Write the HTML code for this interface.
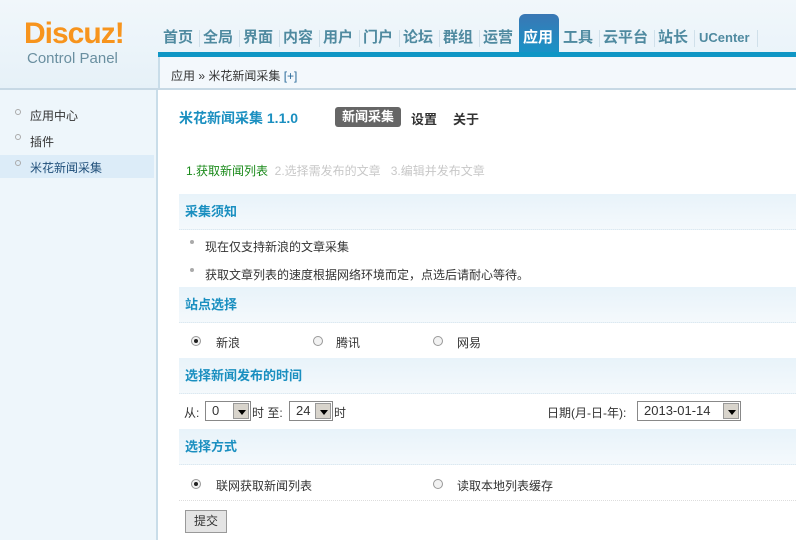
<!DOCTYPE html><html><head><meta charset="utf-8"><style>
*{margin:0;padding:0;box-sizing:border-box}
body{width:796px;height:540px;overflow:hidden;font-family:"Liberation Sans","Noto Sans CJK SC",sans-serif;font-size:12px;color:#333;background:#fff;position:relative}
.a{position:absolute}
#hd{left:0;top:0;width:796px;height:90px;background:linear-gradient(#f1f7fb,#e6f1f8)}
.nav{top:27px;font-size:15px;font-weight:bold;color:#4f8aa0;height:22px;line-height:22px}
.sep{top:30px;width:1px;height:17px;background:#d0e0ea}
.sh{left:179px;width:617px;height:36px;background:linear-gradient(#e8f3fa,#f4f9fc);color:#1a8fc0;font-weight:bold;font-size:13px;line-height:36px;padding-left:6px;border-bottom:1px dotted #dde8ef}
.rd{width:10px;height:10px;border-radius:50%;border:1px solid #999;background:#f2f2f2}
.rd.on::after{content:"";position:absolute;left:2px;top:2px;width:4px;height:4px;border-radius:50%;background:#222}
.sel{height:20px;border:1px solid #888;background:#fff;font-size:13px;line-height:18px;padding-left:6px}
.sel i{position:absolute;right:1px;top:1px;width:16px;height:16px;background:#d8d4cc;border:1px solid #999}
.sel i::after{content:"";position:absolute;left:4px;top:6px;border:4px solid transparent;border-top:5px solid #000}
</style></head><body>
<div class="a" id="hd"></div>
<div class="a" style="left:24px;top:17px;font-size:30px;font-weight:bold;color:#f7941d;letter-spacing:-1px">Discuz!</div>
<div class="a" style="left:27px;top:50px;font-size:15px;color:#6a8fa0">Control Panel</div>
<div class="a" style="left:519px;top:14px;width:40px;height:42px;border-radius:6px 6px 0 0;background:linear-gradient(#3a77b4,#1695c8)"></div>
<div class="a nav" style="left:163px">首页</div><div class="a sep" style="left:199px"></div>
<div class="a nav" style="left:203px">全局</div><div class="a sep" style="left:239px"></div>
<div class="a nav" style="left:243px">界面</div><div class="a sep" style="left:279px"></div>
<div class="a nav" style="left:283px">内容</div><div class="a sep" style="left:319px"></div>
<div class="a nav" style="left:323px">用户</div><div class="a sep" style="left:359px"></div>
<div class="a nav" style="left:363px">门户</div><div class="a sep" style="left:399px"></div>
<div class="a nav" style="left:403px">论坛</div><div class="a sep" style="left:439px"></div>
<div class="a nav" style="left:443px">群组</div><div class="a sep" style="left:479px"></div>
<div class="a nav" style="left:483px">运营</div>
<div class="a nav" style="left:523px;color:#fff">应用</div>
<div class="a nav" style="left:563px">工具</div><div class="a sep" style="left:599px"></div>
<div class="a nav" style="left:603px">云平台</div><div class="a sep" style="left:654px"></div>
<div class="a nav" style="left:658px">站长</div><div class="a sep" style="left:694px"></div>
<div class="a nav" style="left:699px;font-size:13px">UCenter</div><div class="a sep" style="left:757px"></div>
<div class="a" style="left:158px;top:52px;width:638px;height:5px;background:#0f96c5"></div>
<div class="a" style="left:158px;top:57px;width:638px;height:32px;background:#f3f8fc;border-left:2px solid #c9dde9"></div>
<div class="a" style="left:171px;top:67px;font-size:12px;color:#333">应用 » 米花新闻采集 <span style="color:#2a6a9a">[+]</span></div>
<div class="a" style="left:0;top:88px;width:796px;height:2px;background:#c7d9e5"></div>
<div class="a" style="left:0;top:90px;width:158px;height:450px;background:#eef6fb;border-right:2px solid #c9dde9"></div>
<div class="a" style="left:0;top:155px;width:154px;height:23px;background:#dcecf8"></div>
<div class="a" style="left:15px;top:109px;width:6px;height:6px;border:1px solid #aaa;border-radius:50%"></div>
<div class="a" style="left:15px;top:134px;width:6px;height:6px;border:1px solid #aaa;border-radius:50%"></div>
<div class="a" style="left:15px;top:160px;width:6px;height:6px;border:1px solid #aaa;border-radius:50%"></div>
<div class="a" style="left:30px;top:107px">应用中心</div>
<div class="a" style="left:30px;top:133px">插件</div>
<div class="a" style="left:30px;top:159px;color:#1f4f7a">米花新闻采集</div>
<div class="a" style="left:179px;top:108px;font-size:14px;font-weight:bold;color:#1a8fc0">米花新闻采集 1.1.0</div>
<div class="a" style="left:335px;top:107px;width:66px;height:20px;border-radius:3px;background:#666;color:#fff;font-weight:bold;font-size:13px;text-align:center;line-height:20px">新闻采集</div>
<div class="a" style="left:411px;top:109px;font-weight:bold;font-size:13px">设置</div>
<div class="a" style="left:453px;top:109px;font-weight:bold;font-size:13px">关于</div>
<div class="a" style="left:186px;top:162px;color:#1a8a1a">1.获取新闻列表 <span style="color:#c8c8c8">&nbsp;2.选择需发布的文章 &nbsp;&nbsp;3.编辑并发布文章</span></div>
<div class="a sh" style="top:194px">采集须知</div>
<div class="a" style="left:190px;top:240px;width:4px;height:4px;border-radius:50%;background:#aaa"></div>
<div class="a" style="left:205px;top:238px">现在仅支持新浪的文章采集</div>
<div class="a" style="left:190px;top:268px;width:4px;height:4px;border-radius:50%;background:#aaa"></div>
<div class="a" style="left:205px;top:266px">获取文章列表的速度根据网络环境而定，点选后请耐心等待。</div>
<div class="a sh" style="top:287px">站点选择</div>
<div class="a rd on" style="left:191px;top:336px"></div><div class="a" style="left:216px;top:334px">新浪</div>
<div class="a rd" style="left:313px;top:336px"></div><div class="a" style="left:336px;top:334px">腾讯</div>
<div class="a rd" style="left:433px;top:336px"></div><div class="a" style="left:457px;top:334px">网易</div>
<div class="a sh" style="top:358px">选择新闻发布的时间</div>
<div class="a" style="left:184px;top:404px">从:</div>
<div class="a sel" style="left:205px;top:401px;width:46px">0<i></i></div>
<div class="a" style="left:252px;top:404px">时 至:</div>
<div class="a sel" style="left:289px;top:401px;width:44px">24<i></i></div>
<div class="a" style="left:334px;top:404px">时</div>
<div class="a" style="left:547px;top:404px">日期(月-日-年):</div>
<div class="a sel" style="left:637px;top:401px;width:104px">2013-01-14<i></i></div>
<div class="a sh" style="top:429px">选择方式</div>
<div class="a rd on" style="left:191px;top:479px"></div><div class="a" style="left:216px;top:477px">联网获取新闻列表</div>
<div class="a rd" style="left:433px;top:479px"></div><div class="a" style="left:457px;top:477px">读取本地列表缓存</div>
<div class="a" style="left:179px;top:500px;width:617px;border-top:1px dotted #ddd"></div>
<div class="a" style="left:185px;top:510px;width:42px;height:23px;background:#e4e4e4;border:1px solid #999;text-align:center;line-height:21px">提交</div>
</body></html>
